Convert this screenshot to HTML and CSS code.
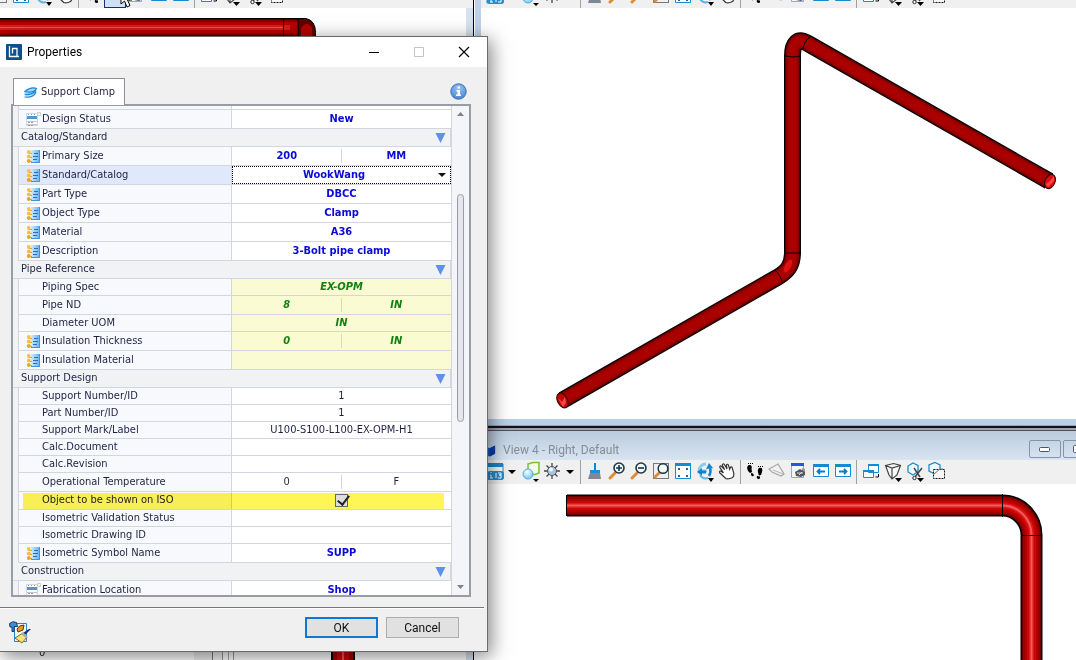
FILE: index.html
```
<!DOCTYPE html>
<html lang="en">
<head>
<meta charset="utf-8">
<title>Properties</title>
<link rel="stylesheet" href="styles.css">
</head>
<body>
<svg class="defs" aria-hidden="true">
  <defs>
    <linearGradient id="g-page" x1="0" y1="0" x2="1" y2="0"><stop offset="0" stop-color="#d4ebfc"/><stop offset="1" stop-color="#5cb0f2"/></linearGradient>
    <radialGradient id="g-ball" cx=".4" cy=".3" r=".8"><stop offset="0" stop-color="#fff"/><stop offset="1" stop-color="#63bdf0"/></radialGradient>
    <radialGradient id="g-info" cx=".5" cy=".3" r=".7"><stop offset="0" stop-color="#9cc4f2"/><stop offset="1" stop-color="#4a86d2"/></radialGradient>
    <symbol id="i-list" viewBox="0 0 15 15"><path d="M5 1h9v13H5z" fill="url(#g-page)"/><path d="M13.500 1v12.500H5" fill="none" stroke="#3f93e0"/><path d="M8 4.500h4M7 7.500h5M7 10.500h4" stroke="#2a6dbb"/><path d="M3 4.500h3M3 8.500h3M3 12.500h3" stroke="#d9a036"/><circle cx="2.800" cy="3" r="1.900" fill="#f4c050"/><circle cx="2.800" cy="7.500" r="1.900" fill="#f4bc48"/><circle cx="2.800" cy="12" r="1.900" fill="#e8a428"/></symbol>
    <symbol id="i-form" viewBox="0 0 15 15"><path d="M.5 1.500h11v12H.5z" fill="#fff" stroke="#d5d8dc"/><path d="M1 4h10v3H1z" fill="#4b97d8"/><path d="M2 2.500h8" stroke="#999" stroke-dasharray="1 2"/><path d="M1 9.500h10M1 12.500h10" stroke="#c3c7cc"/><path d="M2 10.500h6M2 13.500h6" stroke="#999" stroke-dasharray="2 1"/><path d="M11.500.5h3v3h-3z" fill="#f4f4f4" stroke="#ccc"/></symbol>
    <symbol id="i-tri" viewBox="0 0 10 10"><path d="M0 0h10L5 10z" fill="#5e91ea"/></symbol>
    <symbol id="t-info" viewBox="0 0 22 24"><path d="M3 4h16v15H3z" fill="#f8fbfd" stroke="#168bd0"/><path d="M3 3h16v4H3z" fill="#1689d2"/><path d="M6 11h11a3 3 0 0 1 3 3v3a3 3 0 0 1-3 3H6a3 3 0 0 1-3-3v-3a3 3 0 0 1 3-3z" fill="#238fd0"/><path d="M7 12v1m-1 2h1v3m-1 0h3M12 13v5M14 13h3v2h-2 2v3h-3" fill="none" stroke="#fff"/></symbol>
    <symbol id="t-caret" viewBox="0 0 14 24"><path d="M2 10h8l-4 4z" fill="#000"/></symbol>
    <symbol id="t-shape" viewBox="0 0 22 24"><path d="M8 4l5-1.500h6V13l-4 1.500H8z" fill="#f3fbe9" stroke="#7cc22c" stroke-width="1.500"/><circle cx="8" cy="14" r="5" fill="url(#g-ball)" stroke="#4dafe4"/><path d="M13 19h6l-3 3z"/></symbol>
    <symbol id="t-sun" viewBox="0 0 22 24"><path d="M10 3v16M2 11h16M4.500 5.500l11 11M15.500 5.500l-11 11" stroke="#444" stroke-width="1.300"/><circle cx="10" cy="11" r="4.500" fill="#a9c6d6" stroke="#556"/><circle cx="9" cy="9.500" r="2" fill="#f2f8fb"/></symbol>
    <symbol id="t-brush" viewBox="0 0 22 24"><path d="M10 3h2v7h-2z" fill="#1686c8"/><path d="M6 10h10v3H6z" fill="#1a91d4"/><path d="M6 13h10l1 6H4z" fill="#7d8894"/></symbol>
    <symbol id="t-zin" viewBox="0 0 22 24"><path d="M9 13l-5 5" stroke="#df8d35" stroke-width="3" stroke-linecap="round"/><circle cx="13" cy="8" r="5" fill="#eff8fd" stroke="#20353f" stroke-width="1.600"/><path d="M10 8h6M13 5v6" stroke="#0d3550" stroke-width="1.600"/></symbol>
    <symbol id="t-zout" viewBox="0 0 22 24"><path d="M9 13l-5 5" stroke="#df8d35" stroke-width="3" stroke-linecap="round"/><circle cx="13" cy="8" r="5" fill="#eff8fd" stroke="#20353f" stroke-width="1.600"/><path d="M10 8h6" stroke="#0d3550" stroke-width="1.600"/></symbol>
    <symbol id="t-zwin" viewBox="0 0 22 24"><path d="M3.500 3.500h15v15h-15z" fill="none" stroke="#000" stroke-dasharray="1 1"/><path d="M9 13l-4 4" stroke="#df8d35" stroke-width="3" stroke-linecap="round"/><circle cx="13" cy="8.500" r="4.800" fill="#eff8fd" stroke="#20353f" stroke-width="1.500"/></symbol>
    <symbol id="t-fit" viewBox="0 0 22 24"><path d="M3.500 3.500h15v15h-15z" fill="#fff" stroke="#168bd0"/><path d="M3 3h16v3H3z" fill="#168bd0"/><path d="M6 8h2v2H6zM14 8h2v2h-2zM6 15h2v2H6zM14 15h2v2h-2z" fill="#2a6694"/></symbol>
    <symbol id="t-rot" viewBox="0 0 22 24"><path d="M12 4C7 4 5 8 5 11h8" fill="none" stroke="#8cccf0" stroke-width="3"/><path d="M3 12l5-4v2.500h4v3H8V16z" fill="#1683cc"/><path d="M15 16c2-3 2-5 1-8" fill="none" stroke="#1683cc" stroke-width="2.500"/><path d="M12 9l3-6 4 5z" fill="#1683cc"/><path d="M6 15c2 3 5 4 8 3" fill="none" stroke="#5fb4e6" stroke-width="2"/><path d="M14 18h6l-3 4z"/></symbol>
    <symbol id="t-hand" viewBox="0 0 22 24"><g transform="rotate(-14 11 11)"><path d="M8 18l-2.500-4-2-3c-.5-1.500 1-2 2-.8L7 12 5 6c-.3-1.500 1.300-2 1.900-.6L9 9 8 4.500c-.2-1.500 1.500-1.900 2-.4L11.500 9l.3-3.600c.4-1.300 1.900-1.100 2 .2L14 10l1-1.500c.8-.9 2-.3 1.800.8L17 15c-.3 3-2 4-4 4-2.500 0-4-.2-5-1z" fill="#fff" stroke="#333" stroke-width="1.200"/></g></symbol>
    <symbol id="t-walk" viewBox="0 0 22 24"><path d="M5 5c3 0 3 2 2.500 4l.5 3-2 1C3 11 2 6 5 5zM7 13l2 .5 1 2c-1 1-2 1-3-.5zM15 8c3-1 4 1 3 4l-1 3-2 .5c-1-3-2-6 0-7.500zM13 16l3 .5v2c-2 1-4 0-3-2.500z"/><path d="M4 3.500h5M14 6.500h5" stroke="#000" stroke-dasharray="1 1"/></symbol>
    <symbol id="t-fly" viewBox="0 0 22 24"><path d="M3 9l9-5 6 10-3 2-9-4z" fill="#f2f2f2" stroke="#a9a9a9" stroke-width="1.300"/><path d="M7 10l10 4" stroke="#b5b5b5"/></symbol>
    <symbol id="t-cam" viewBox="0 0 22 24"><path d="M3.500 4.500h12v13h-12z" fill="#f5f7fb" stroke="#9aa7ca"/><path d="M3 3h13v3H3z" fill="#2857d8"/><path d="M14 8l3 1v3h-3z" fill="#999"/><path d="M7 12l5-3 5 3v3l-4 2-5-1z" fill="#55555e"/><path d="M9 13h6M11 15l3-3" stroke="#ddd"/></symbol>
    <symbol id="t-prev" viewBox="0 0 22 24"><path d="M3.500 4.500h15v12h-15z" fill="#fff" stroke="#168bd0"/><path d="M3 4h16v3H3z" fill="#168bd0"/><path d="M15 11.500H8M10 9l-2.500 2.500L10 14" fill="none" stroke="#087dc0" stroke-width="1.800"/></symbol>
    <symbol id="t-next" viewBox="0 0 22 24"><path d="M3.500 4.500h15v12h-15z" fill="#fff" stroke="#168bd0"/><path d="M3 4h16v3H3z" fill="#168bd0"/><path d="M7 11.500h7M12 9l2.500 2.500L12 14" fill="none" stroke="#087dc0" stroke-width="1.800"/></symbol>
    <symbol id="t-copy" viewBox="0 0 22 24"><path d="M8.500 4.500h10v8h-10zM3.500 10.500h10v7h-10z" fill="#fff" stroke="#168bd0"/><path d="M8 4h11v2H8zM3 10h11v2H3z" fill="#168bd0"/><path d="M18.500 14v3h-3" fill="none" stroke="#000"/></symbol>
    <symbol id="t-persp" viewBox="0 0 22 24"><path d="M3.500 5.500l8-2 7 2L15 15l-5 4-3-4zM3.500 5.500L10 8l8.500-2.500M10 8v11" fill="#f7f7f7" stroke="#444" stroke-width="1.200"/><path d="M13 18h7l-3.500 4z"/></symbol>
    <symbol id="t-clip" viewBox="0 0 22 24"><path d="M9 3l5 2.500v6L9 15l-5-3V6z" fill="#f4fbff" stroke="#168bd0" stroke-width="1.300"/><path d="M10 8l6 9M18 8l-7 9" stroke="#444" stroke-width="1.500"/><circle cx="10.500" cy="18" r="1.700" fill="#fff" stroke="#222"/><path d="M13 18h7l-3.500 4z"/></symbol>
    <symbol id="t-mask" viewBox="0 0 22 24"><path d="M9 2.500l5 2.500v6L9 14l-6-3V5z" fill="#f4fbff" stroke="#168bd0" stroke-width="1.300"/><path d="M7.500 9.500h11v9h-11z" fill="#f7f7f7" stroke="#111" stroke-dasharray="2 1"/><path d="M8 14l6-5h3" fill="none" stroke="#777"/></symbol>
  </defs>
</svg>

<main class="desktop">
  <section class="view view-left" aria-label="Left view">
    <div class="toolbar toolbar-cut toolbar-offset">
      <button aria-label="Window area"><svg><use href="#t-zwin"/></svg></button>
      <button aria-label="Fit view"><svg><use href="#t-fit"/></svg></button>
      <button aria-label="Rotate view"><svg><use href="#t-rot"/></svg></button>
      <button aria-label="Pan view"><svg><use href="#t-hand"/></svg></button>
      <span class="sep"></span>
      <button aria-label="Walk"><svg><use href="#t-walk"/></svg></button>
      <button class="pressed" aria-label="Fly"><svg><use href="#t-fly"/></svg></button>
      <button aria-label="Navigate"><svg><use href="#t-cam"/></svg></button>
      <button aria-label="View previous"><svg><use href="#t-prev"/></svg></button>
      <button aria-label="View next"><svg><use href="#t-next"/></svg></button>
      <span class="sep"></span>
      <button aria-label="Copy view"><svg><use href="#t-copy"/></svg></button>
      <button aria-label="Perspective"><svg><use href="#t-persp"/></svg></button>
      <button aria-label="Clip volume"><svg><use href="#t-clip"/></svg></button>
      <button aria-label="Clip mask"><svg><use href="#t-mask"/></svg></button>
    </div>
    <div class="canvas">
      <svg width="466" height="652" viewBox="0 8 466 652">
        <g fill="none">
          <path d="M-4 27.500H300" stroke="#000" stroke-width="19"/>
          <path d="M-4 27.500H300" stroke="#8a0000" stroke-width="16"/>
          <path d="M-4 27.500H300" stroke="#b80000" stroke-width="11"/>
          <path d="M-4 27.500H290" stroke="#d81c1c" stroke-width="5"/>
          <path d="M-4 27.500H283" stroke="#f05050" stroke-width="1"/>
        </g>
        <path d="M283.500 18v19" stroke="#000"/>
        <path d="M298 18.500h8q9.500 2 9.500 14V45h-17z" fill="#5c0000" stroke="#000"/>
        <path d="M301 45V28q6-8 11 0v17z" fill="#b80000"/>
        <path d="M331 640h24v30h-24z" fill="#000"/><path d="M333 640h20v30h-20z" fill="#a40000"/><path d="M337 640h12v30h-12z" fill="#cc0808"/><path d="M342 640h2v30h-2z" fill="#f05050"/>
      </svg>
    </div>
    <div class="ledger"><span>0</span><i></i></div>
  </section>

  <section class="view view-iso" aria-label="Isometric view">
    <div class="toolbar toolbar-cut">
      <button aria-label="View attributes"><svg><use href="#t-info"/></svg></button>
      <span class="blank"></span>
      <button aria-label="Display style"><svg><use href="#t-shape"/></svg></button>
      <button aria-label="Brightness"><svg><use href="#t-sun"/></svg></button>
      <span class="blank"></span>
      <span class="sep"></span>
      <button aria-label="Update view"><svg><use href="#t-brush"/></svg></button>
      <button aria-label="Zoom in"><svg><use href="#t-zin"/></svg></button>
      <button aria-label="Zoom out"><svg><use href="#t-zout"/></svg></button>
      <button aria-label="Window area"><svg><use href="#t-zwin"/></svg></button>
      <button aria-label="Fit view"><svg><use href="#t-fit"/></svg></button>
      <button aria-label="Rotate view"><svg><use href="#t-rot"/></svg></button>
      <button aria-label="Pan view"><svg><use href="#t-hand"/></svg></button>
      <span class="sep"></span>
      <button aria-label="Walk"><svg><use href="#t-walk"/></svg></button>
      <button aria-label="Fly"><svg><use href="#t-fly"/></svg></button>
      <button aria-label="Navigate"><svg><use href="#t-cam"/></svg></button>
      <button aria-label="View previous"><svg><use href="#t-prev"/></svg></button>
      <button aria-label="View next"><svg><use href="#t-next"/></svg></button>
      <span class="sep"></span>
      <button aria-label="Copy view"><svg><use href="#t-copy"/></svg></button>
      <button aria-label="Perspective"><svg><use href="#t-persp"/></svg></button>
      <button aria-label="Clip volume"><svg><use href="#t-clip"/></svg></button>
      <button aria-label="Clip mask"><svg><use href="#t-mask"/></svg></button>
    </div>
    <div class="canvas">
      <svg width="595" height="411" viewBox="481 8 595 411">
        <defs><path id="iso" d="M1049 181L808 43.500C797 37 792.500 44 792.500 56V252C792.500 265 788 271 778 277L563 400"/></defs>
        <g fill="none" stroke-linejoin="round">
          <use href="#iso" stroke="#000" stroke-width="17"/>
          <use href="#iso" stroke="#5a0000" stroke-width="15"/>
          <use href="#iso" stroke="#860000" stroke-width="13"/>
          <use href="#iso" stroke="#9e0000" stroke-width="11"/>
          <use href="#iso" stroke="#aa0000" stroke-width="7"/>
        </g>
        <g fill="none" stroke="#000"><path d="M785 56q8 2 16 0M811 36q-7 5-8 13M785 253h15M775 270q6 5 7 13"/></g>
        <ellipse cx="788" cy="266" rx="3" ry="7" transform="rotate(28 788 266)" fill="#ec1717" opacity=".8"/>
        <ellipse cx="1050" cy="181.500" rx="5" ry="7.500" transform="rotate(25 1050 181.500)" fill="#dc0c0c" stroke="#200"/>
        <path d="M1046 184l4-3 4-5v5l-6 6z" fill="#ff4545"/>
        <ellipse cx="562.500" cy="400.500" rx="5" ry="8" transform="rotate(-28 562.500 400.500)" fill="#c40505" stroke="#200"/>
        <path d="M558 398l4 4 3-5 1 6-3 4z" fill="#ff4545"/>
      </svg>
    </div>
  </section>

  <section class="view view-four" aria-label="View 4">
    <header class="view-title">
      <svg class="cube" viewBox="0 0 12 14"><path d="M0 3l5 2 6-3v9l-6 3-5-2z" fill="#1168cf"/><path d="M5 5l6-3v9l-6 3z" fill="#0a3fae"/></svg>
      <h2>View 4 - Right, Default</h2>
      <button class="mdi" aria-label="Minimize view"><svg viewBox="0 0 12 8"><rect x=".5" y="2.500" width="10" height="4" rx="1"/></svg></button>
      <button class="mdi" aria-label="Maximize view"><svg viewBox="0 0 12 8"><rect x=".5" y=".5" width="10" height="7" rx="1"/></svg></button>
    </header>
    <div class="toolbar">
      <button aria-label="View attributes"><svg><use href="#t-info"/></svg></button>
      <button class="caret" aria-label="View attributes menu"><svg><use href="#t-caret"/></svg></button>
      <button aria-label="Display style"><svg><use href="#t-shape"/></svg></button>
      <button aria-label="Brightness"><svg><use href="#t-sun"/></svg></button>
      <button class="caret" aria-label="Brightness menu"><svg><use href="#t-caret"/></svg></button>
      <span class="sep"></span>
      <button aria-label="Update view"><svg><use href="#t-brush"/></svg></button>
      <button aria-label="Zoom in"><svg><use href="#t-zin"/></svg></button>
      <button aria-label="Zoom out"><svg><use href="#t-zout"/></svg></button>
      <button aria-label="Window area"><svg><use href="#t-zwin"/></svg></button>
      <button aria-label="Fit view"><svg><use href="#t-fit"/></svg></button>
      <button aria-label="Rotate view"><svg><use href="#t-rot"/></svg></button>
      <button aria-label="Pan view"><svg><use href="#t-hand"/></svg></button>
      <span class="sep"></span>
      <button aria-label="Walk"><svg><use href="#t-walk"/></svg></button>
      <button aria-label="Fly"><svg><use href="#t-fly"/></svg></button>
      <button aria-label="Navigate"><svg><use href="#t-cam"/></svg></button>
      <button aria-label="View previous"><svg><use href="#t-prev"/></svg></button>
      <button aria-label="View next"><svg><use href="#t-next"/></svg></button>
      <span class="sep"></span>
      <button aria-label="Copy view"><svg><use href="#t-copy"/></svg></button>
      <button aria-label="Perspective"><svg><use href="#t-persp"/></svg></button>
      <button aria-label="Clip volume"><svg><use href="#t-clip"/></svg></button>
      <button aria-label="Clip mask"><svg><use href="#t-mask"/></svg></button>
    </div>
    <div class="canvas">
      <svg width="595" height="400" viewBox="481 484 595 400">
        <defs><path id="elev" d="M567 505.500H1002A29.500 29.500 0 0 1 1031.500 535V900"/></defs>
        <g fill="none">
          <use href="#elev" stroke="#000" stroke-width="22"/>
          <use href="#elev" stroke="#6c0000" stroke-width="19"/>
          <use href="#elev" stroke="#960000" stroke-width="17"/>
          <use href="#elev" stroke="#b40000" stroke-width="13"/>
          <use href="#elev" stroke="#cc0404" stroke-width="9"/>
          <use href="#elev" stroke="#da1c1c" stroke-width="5"/>
          <use href="#elev" stroke="#f45c5c" stroke-width="2"/>
          <path d="M566.500 495v21M1002.500 494v23M1021 535.500h21" stroke="#000"/>
        </g>
      </svg>
    </div>
  </section>

  <svg class="pointer" width="14" height="20" viewBox="0 0 14 20"><path d="M1 1v14l3.500-3 2.500 6 3-1.500-2.500-5.500H12z" fill="#fff" stroke="#000"/></svg>

  <section class="dialog" role="dialog" aria-labelledby="dlg-title">
    <header class="titlebar">
      <svg class="app" viewBox="0 0 16 16"><rect width="16" height="16" rx="1" fill="#0b4f8c"/><path d="M3.500 2v10.500H13M6.500 9.500V4.500h4.500v8" fill="none" stroke="#fff" stroke-width="1.300"/></svg>
      <h1 id="dlg-title">Properties</h1>
      <button aria-label="Minimize"><svg viewBox="0 0 12 12"><path d="M1 6.500h10" stroke="#000"/></svg></button>
      <button disabled aria-label="Maximize"><svg viewBox="0 0 12 12"><path d="M1.500 1.500h9v9h-9z" fill="none" stroke="#c4c4c4"/></svg></button>
      <button aria-label="Close"><svg viewBox="0 0 12 12"><path d="M1 1l10 10M11 1L1 11" stroke="#000" stroke-width="1.200"/></svg></button>
    </header>
    <div class="tabs">
      <button class="tab" role="tab" aria-selected="true">
        <svg viewBox="0 0 14 12"><path d="M1 5q5-5 12-3l-1 5q-5 4-12 2z" fill="#a4d6f7"/><path d="M1 5.500q6-5 11.500-3-3 5-11.500 3zM1 8.500q6 1 11-4M.5 11q9 1 11.500-5" fill="none" stroke="#1a8bdc" stroke-width="1.200"/></svg>
        Support Clamp</button>
      <button class="help" aria-label="Information"><svg viewBox="0 0 17 17"><circle cx="8.500" cy="8.500" r="7.700" fill="url(#g-info)" stroke="#3a70b4"/><path d="M7.500 3.500h2.500v2H7.500zM6.500 7H10v4.500h1V13H6v-1.500h1.500v-3h-1z" fill="#fff"/></svg></button>
    </div>
    <div class="panel">
      <div class="scroll">
      <table class="grid">
        <colgroup><col class="c-gutter"><col class="c-label"><col><col></colgroup>
        <tbody>
        <tr class="stub"><td></td><th></th><td colspan="2"></td></tr>
        <tr class="tall"><td></td><th scope="row"><svg><use href="#i-form"/></svg>Design Status</th><td colspan="2" class="b">New</td></tr>
        <tr class="group"><th colspan="4" scope="colgroup">Catalog/Standard<button aria-label="Collapse"><svg><use href="#i-tri"/></svg></button></th></tr>
        <tr class="tall"><td></td><th scope="row"><svg><use href="#i-list"/></svg>Primary Size</th><td class="b split">200</td><td class="b">MM</td></tr>
        <tr class="tall active"><td></td><th scope="row"><svg><use href="#i-list"/></svg><label for="std">Standard/Catalog</label></th><td colspan="2" class="b"><div class="pick"><select id="std"><option>WookWang</option></select></div></td></tr>
        <tr class="tall"><td></td><th scope="row"><svg><use href="#i-list"/></svg>Part Type</th><td colspan="2" class="b">DBCC</td></tr>
        <tr class="tall"><td></td><th scope="row"><svg><use href="#i-list"/></svg>Object Type</th><td colspan="2" class="b">Clamp</td></tr>
        <tr class="tall"><td></td><th scope="row"><svg><use href="#i-list"/></svg>Material</th><td colspan="2" class="b">A36</td></tr>
        <tr class="tall"><td></td><th scope="row"><svg><use href="#i-list"/></svg>Description</th><td colspan="2" class="b">3-Bolt pipe clamp</td></tr>
        <tr class="group"><th colspan="4" scope="colgroup">Pipe Reference<button aria-label="Collapse"><svg><use href="#i-tri"/></svg></button></th></tr>
        <tr class="ref"><td></td><th scope="row" class="plain">Piping Spec</th><td colspan="2">EX-OPM</td></tr>
        <tr class="ref tall"><td></td><th scope="row" class="plain">Pipe ND</th><td class="split">8</td><td>IN</td></tr>
        <tr class="ref"><td></td><th scope="row" class="plain">Diameter UOM</th><td colspan="2">IN</td></tr>
        <tr class="ref tall"><td></td><th scope="row"><svg><use href="#i-list"/></svg>Insulation Thickness</th><td class="split">0</td><td>IN</td></tr>
        <tr class="ref tall"><td></td><th scope="row"><svg><use href="#i-list"/></svg>Insulation Material</th><td colspan="2"></td></tr>
        <tr class="group"><th colspan="4" scope="colgroup">Support Design<button aria-label="Collapse"><svg><use href="#i-tri"/></svg></button></th></tr>
        <tr><td></td><th scope="row" class="plain">Support Number/ID</th><td colspan="2">1</td></tr>
        <tr><td></td><th scope="row" class="plain">Part Number/ID</th><td colspan="2">1</td></tr>
        <tr><td></td><th scope="row" class="plain">Support Mark/Label</th><td colspan="2">U100-S100-L100-EX-OPM-H1</td></tr>
        <tr><td></td><th scope="row" class="plain">Calc.Document</th><td colspan="2"></td></tr>
        <tr><td></td><th scope="row" class="plain">Calc.Revision</th><td colspan="2"></td></tr>
        <tr class="tall"><td></td><th scope="row" class="plain">Operational Temperature</th><td class="split">0</td><td>F</td></tr>
        <tr class="marked"><td></td><th scope="row" class="plain"><label for="iso-on">Object to be shown on ISO</label></th><td colspan="2"><input type="checkbox" id="iso-on" checked></td></tr>
        <tr><td></td><th scope="row" class="plain">Isometric Validation Status</th><td colspan="2"></td></tr>
        <tr><td></td><th scope="row" class="plain">Isometric Drawing ID</th><td colspan="2"></td></tr>
        <tr class="tall"><td></td><th scope="row"><svg><use href="#i-list"/></svg>Isometric Symbol Name</th><td colspan="2" class="b">SUPP</td></tr>
        <tr class="group"><th colspan="4" scope="colgroup">Construction<button aria-label="Collapse"><svg><use href="#i-tri"/></svg></button></th></tr>
        <tr class="tall"><td></td><th scope="row"><svg><use href="#i-form"/></svg>Fabrication Location</th><td colspan="2" class="b">Shop</td></tr>
        </tbody>
      </table>
      </div>
      <div class="bar" aria-hidden="true">
        <svg viewBox="0 0 7 4"><path d="M0 4h7L3.500 0z"/></svg>
        <span class="track"><i></i></span>
        <svg viewBox="0 0 7 4"><path d="M0 0h7L3.500 4z"/></svg>
      </div>
    </div>
    <footer class="actions">
      <button class="style" aria-label="Apply style"><svg viewBox="0 0 24 24"><path d="M6.500 3.500h12v18h-12z" fill="#eaf6fd" stroke="#2687c4"/><path d="M1.500 3.500q3-3 7-1l1 4H6v5H4V7H2z" fill="#3f8ed6" stroke="#173c6c"/><path d="M9 9q2-4 7-4l-1 5-5 2z" fill="#f29a1c" stroke="#5e3500"/><path d="M23 9l-6 6-2-2 6-4z" fill="#1c2c66"/><path d="M15 13l4 4-5 6-7-5z" fill="#f7e27a" stroke="#81701d"/><path d="M15 12l5 5-2 1-5-4z" fill="#aaa"/></svg></button>
      <button class="push default">OK</button>
      <button class="push">Cancel</button>
    </footer>
  </section>
</main>
</body>
</html>
```
FILE: styles.css
```
* { box-sizing: border-box; }
html, body { height: 100%; }
body { margin: 0; overflow: hidden; background: #fff; font: 11px/14px "DejaVu Sans Condensed", Tahoma, sans-serif; color: #1e2142; }
button { font: inherit; color: inherit; background: none; border: 0; padding: 0; }
.defs { position: absolute; width: 0; height: 0; }

.desktop { position: relative; display: grid; grid-template-columns: 474px 1fr; grid-template-rows: 425px 1fr; height: 100vh; overflow: hidden; }
.view { display: flex; flex-direction: column; min-width: 0; overflow: hidden; background: #fff; }
.view-left { position: relative; grid-row: 1 / 3; border-right: 1px solid #000; }
.view-left .canvas { border-right: 7px solid #d6e2f0; }
.view-iso { margin-left: 1px; border-left: 6px solid #c0d1e7; border-bottom: 6px solid #b9cfe8; }
.view-four { border-top: 1px solid #4cc3d8; box-shadow: inset 0 2px #111; padding-top: 4px; background: linear-gradient(#9da3aa, #9da3aa) 0 2px / 100% 2px no-repeat, #fff; }
.view-four .view-title { border-top: 1px solid #4f545a; }
.view-four .canvas { margin-left: 7px; }
.canvas { flex: 1; min-height: 0; overflow: hidden; }
.canvas svg { display: block; }

.toolbar { flex: none; display: flex; align-items: flex-end; height: 24px; padding-left: 3px; background: #f0f0f0; overflow: hidden; }
.view-four .toolbar { padding-left: 10px; }
.toolbar-cut { height: 8px; }
.toolbar-offset { padding-left: 0; margin-left: -12px; }
.toolbar button { flex: none; width: 22px; height: 24px; }
.toolbar button.caret { width: 14px; }
.toolbar svg { display: block; width: 100%; height: 24px; }
.toolbar .blank { flex: none; width: 14px; }
.toolbar .pressed { border: 1px solid #16307c; border-top: 0; background: #cfe0f7; }
.sep { flex: none; width: 6px; height: 24px; background: linear-gradient(#a0a0a0, #a0a0a0) 2px 0 / 1px 100% no-repeat; }

.view-title { flex: none; display: flex; align-items: center; gap: 2px; height: 30px; padding: 0 0 0 11px; background: linear-gradient(#bccbdc, #d7e4f2); overflow: hidden; }
.view-title h2 { flex: 1; margin: 0 0 0 5px; font: 12px/18px Roboto, "Segoe UI", sans-serif; color: #858d95; padding-top: 8px; }
.cube { width: 11px; height: 14px; margin-top: 8px; }
.mdi { flex: none; display: grid; place-items: center; width: 32px; height: 18px; margin-top: 6px; border: 1px solid #8594a6; border-radius: 2px; }
.mdi:last-child { margin-right: -19px; }
.mdi svg { width: 12px; height: 8px; fill: #fff; stroke: #4b5563; }

.ledger { position: absolute; left: 0; bottom: 0; display: flex; width: 234px; height: 9px; background: #fff; border-right: 1px solid #999; }
.ledger span { flex: 1; padding-left: 39px; line-height: 3px; color: #222; }
.ledger i { width: 39px; background: linear-gradient(90deg, #eee 18px, #777 18px 19px, #f4f4f4 19px 28px, #999 28px 29px, #fff 29px 34px, #aaa 34px 35px, #fff 35px); }
.pointer { position: absolute; left: 120px; top: -11px; }

.dialog { position: absolute; left: -1px; top: 36px; width: 489px; background: #f0f0f0; border: 1px solid #6b6b6b; box-shadow: 3px 4px 18px rgba(0, 0, 0, .5); }
.titlebar { display: flex; align-items: center; height: 30px; padding: 0 1px 0 6px; background: #fff; color: #000; }
.titlebar h1 { flex: 1; margin: 0 0 0 5px; font: 12px/16px Roboto, "Segoe UI", sans-serif; }
.titlebar button { display: grid; place-items: center; width: 45px; height: 28px; }
.titlebar svg { width: 12px; height: 12px; }
.titlebar .app { width: 16px; height: 16px; }

.tabs { display: flex; align-items: flex-end; justify-content: space-between; padding: 11px 20px 0 13px; height: 37px; }
.tab { position: relative; z-index: 1; display: flex; align-items: center; gap: 3px; width: 112px; height: 27px; margin-bottom: -1px; padding-left: 10px; background: #fff; border: 1px solid #8e9298; border-bottom: 0; white-space: nowrap; }
.tab svg { width: 14px; height: 12px; }
.help { margin-bottom: 4px; }
.help svg { display: block; width: 17px; height: 17px; }

.panel { display: flex; height: 493px; margin: 0 16px 0 11px; border: 2px solid #989ca5; background: #fff; }
.scroll { flex: 1; overflow: hidden; }
.grid { width: 100%; table-layout: fixed; border-spacing: 0; }
.c-gutter { width: 5px; }
.c-label { width: 214px; }
.grid td, .grid th { height: 17px; padding: 0; border-bottom: 1px solid #d3d6dd; font-weight: 400; text-align: center; white-space: nowrap; line-height: 14px; }
.grid td:first-child { background: #f1f2f4; border-bottom-color: #f1f2f4; }
.grid th { padding-left: 7px; text-align: left; background: #f8f9fd; border-left: 1px solid #d3d6dd; border-right: 1px solid #d3d6dd; }
.grid th.plain { padding-left: 23px; }
.grid th svg { width: 15px; height: 15px; margin: -2px 1px -2px 0; vertical-align: middle; }
.grid .stub td, .grid .stub th { height: 4px; line-height: 0; }
.grid .tall td, .grid .tall th { height: 19px; }
.grid .group th { height: 18px; padding: 0 4px 1px 8px; border-left: 0; background: #f1f2f4; }
.group button { float: right; height: 14px; }
.grid .group svg { display: block; width: 11px; height: 10px; margin: 2px 0 0; }
.grid td.b { font-weight: 700; color: #0a0ad8; }
.grid td.split { background: linear-gradient(#d3d6dd, #d3d6dd) right center / 1px 14px no-repeat; }
.grid .ref td:not(:first-child) { background-color: #fafbd2; font-weight: 700; font-style: italic; color: #128012; }
.grid .active th { background: #e0e8fb; }
.pick { position: relative; height: 18px; border: 1px dotted #000; }
.pick::after { content: ""; position: absolute; right: 4px; top: 6px; border: 4px solid transparent; border-top-color: #111; border-bottom: 0; }
.pick select { appearance: none; display: block; width: 100%; height: 16px; padding: 0 15px 0 0; border: 0; background: none; font: inherit; color: inherit; text-align: center; text-align-last: center; }
.marked { position: relative; }
.grid .marked td, .grid .marked th { height: 18px; padding-bottom: 1px; }
.marked td:first-child::after { content: ""; position: absolute; inset: 1px 7px 1px 10px; background: #fff557; mix-blend-mode: multiply; pointer-events: none; }
.marked input { appearance: none; display: block; width: 13px; height: 13px; margin: 1px auto 0; border: 1px solid #666; background: #dedede; position: relative; }
.marked input::after { content: ""; position: absolute; left: 4px; top: -2px; width: 5px; height: 10px; border: solid #222; border-width: 0 2px 2px 0; transform: rotate(38deg); }

.bar { display: flex; flex-direction: column; align-items: center; justify-content: space-between; width: 18px; padding: 6px 0; background: #f4f5f8; border-left: 1px solid #d3d6dd; }
.bar svg { width: 7px; height: 4px; fill: #7f8289; }
.track { flex: 1; padding-top: 78px; }
.track i { display: block; width: 7px; height: 228px; border: 1px solid #9a9da5; border-radius: 4px; background: #e4e6ec; }

.actions { display: flex; align-items: flex-start; gap: 8px; height: 44px; margin: 10px 3px 0 0; padding: 9px 25px 0 8px; border-top: 1px solid #777; box-shadow: inset 0 1px #fff; }
.style { margin: 3px auto 0 0; }
.style svg { display: block; width: 24px; height: 24px; }
.push { width: 73px; height: 21px; font: 12px/14px Roboto, "Segoe UI", sans-serif; background: #e1e1e1; border: 1px solid #adadad; color: #111; }
.push.default { border: 2px solid #0f78d4; }
```
